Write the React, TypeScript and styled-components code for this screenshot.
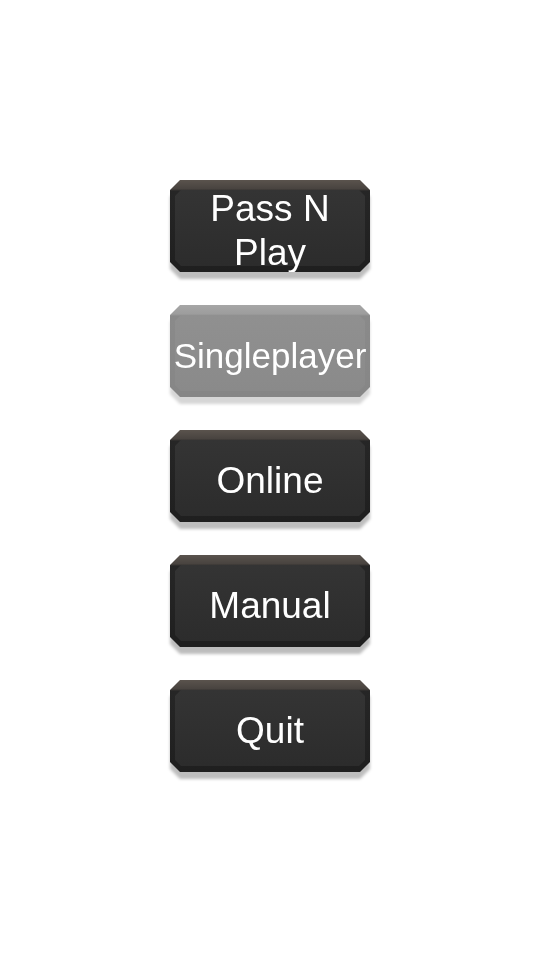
import styled, { createGlobalStyle } from 'styled-components';

const GlobalStyle = createGlobalStyle`
    html, body {
        margin: 0;
        padding: 0;
        background: #ffffff;
    }
`;

const octagon = (c: number) => `polygon(
    ${c}px 0, calc(100% - ${c}px) 0, 100% ${c}px, 100% calc(100% - ${c}px),
    calc(100% - ${c}px) 100%, ${c}px 100%, 0 calc(100% - ${c}px), 0 ${c}px
)`;

const items = [
    { label: 'Pass N Play', disabled: false, size: 37 },
    { label: 'Singleplayer', disabled: true, size: 35 },
    { label: 'Online', disabled: false, size: 37 },
    { label: 'Manual', disabled: false, size: 37 },
    { label: 'Quit', disabled: false, size: 37 },
];

export default function App(): JSX.Element {
    return (
        <>
            <GlobalStyle />
            <Menu>
                {items.map((item) => (
                    <MenuButton key={item.label} type="button" disabled={item.disabled} $disabled={item.disabled}>
                        <Frame $disabled={item.disabled}>
                            <Label $size={item.size}>{item.label}</Label>
                        </Frame>
                    </MenuButton>
                ))}
            </Menu>
        </>
    );
}

const Menu = styled.div`
    width: 100%;
    padding: 180px 0 40px;
    display: flex;
    flex-direction: column;
    align-items: center;
    gap: 33px;
`;

const MenuButton = styled.button<{ $disabled: boolean }>`
    width: 200px;
    height: 92px;
    padding: 0;
    border: none;
    background: none;
    cursor: ${(p) => (p.$disabled ? 'default' : 'pointer')};
    filter: drop-shadow(0 7px 1.5px ${(p) => (p.$disabled ? 'rgba(0,0,0,0.16)' : 'rgba(0,0,0,0.26)')});
`;

const Frame = styled.div<{ $disabled: boolean }>`
    position: relative;
    width: 100%;
    height: 100%;
    box-sizing: border-box;
    padding: 10px 12px 0;
    display: flex;
    justify-content: center;
    align-items: center;
    clip-path: ${octagon(10)};
    background: ${(p) =>
        p.$disabled
            ? 'linear-gradient(to bottom, #a6a6a6 0, #9d9d9d 9px, #8a8a8a 11px, #868686 100%)'
            : 'linear-gradient(to bottom, #5a534d 0, #48433f 9px, #262626 11px, #1f1f1f 100%)'};

    &::before {
        content: '';
        position: absolute;
        top: 10px;
        left: 5px;
        right: 5px;
        bottom: 6px;
        clip-path: ${octagon(6)};
        background: ${(p) =>
            p.$disabled
                ? 'linear-gradient(to bottom, #909090, #8a8a8a)'
                : 'linear-gradient(to bottom, #343434, #2c2c2c)'};
    }
`;

const Label = styled.span<{ $size: number }>`
    position: relative;
    max-width: 176px;
    min-width: min-content;
    font-family: "Liberation Sans", Arial, sans-serif;
    font-size: ${(p) => p.$size}px;
    line-height: 44px;
    color: #ffffff;
    text-align: center;
    white-space: normal;
`;
